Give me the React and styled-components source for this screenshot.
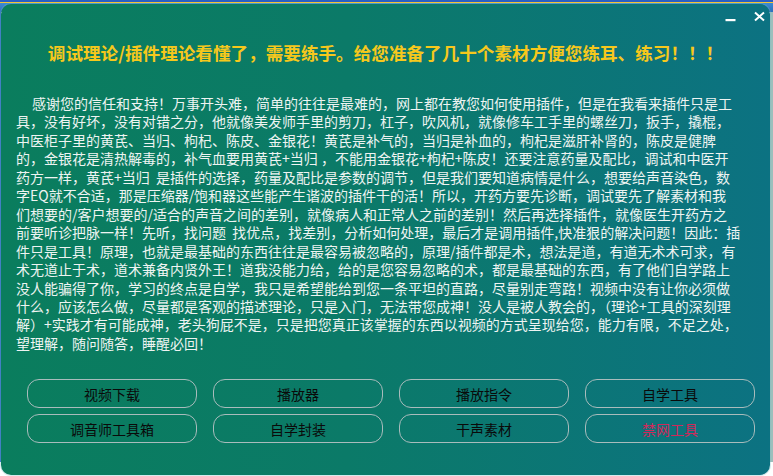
import React from 'react';
import styled, { createGlobalStyle } from 'styled-components';

const GlobalStyle = createGlobalStyle`
  html, body {
    margin: 0;
    padding: 0;
    overflow: hidden;
  }
  body {
    width: 773px;
    height: 476px;
    background:
      linear-gradient(180deg, #2a5fc4 0px, #2a5fc4 2px, #f3c534 2px, #f3c534 3px, #3d8bd0 3px, #2b6fbd 12px, transparent 12px),
      linear-gradient(90deg, #2c66c2 0px, #2c66c2 1px, transparent 1px, transparent 770px, #9cbfbc 770px) 0 0 / 100% 462px no-repeat,
      #ffffff;
  }
`;

const Page = styled.div`
  width: 773px;
  height: 476px;
  box-sizing: border-box;
  padding: 4px 3px 1px 1px;
  display: flex;
`;

const Card = styled.div`
  flex: 1;
  display: flex;
  flex-direction: column;
  border-radius: 10px;
  background: linear-gradient(90deg, #0a7d5d 0%, #0b7a68 45%, #0c7282 100%);
  box-shadow: 0 0 0 1px rgba(120, 190, 200, 0.3);
  font-family: 'Noto Sans CJK SC', 'Noto Sans', sans-serif;
  overflow: hidden;
`;

const WindowBar = styled.div`
  display: flex;
  justify-content: flex-end;
  align-items: center;
  gap: 18px;
  height: 16px;
  margin-top: 4px;
  padding-right: 5px;
`;

const WinButton = styled.button`
  border: 0;
  padding: 0;
  background: none;
  width: 11px;
  height: 11px;
  display: flex;
  align-items: center;
  justify-content: center;
  cursor: pointer;
`;

const Title = styled.h1`
  margin: 17px 0 0;
  text-align: center;
  color: #f6c81c;
  font-size: 17.6px;
  line-height: 24px;
  font-weight: 700;
  white-space: nowrap;
`;

const Body = styled.div`
  margin-top: 29px;
  padding-left: 15px;
  color: #eef4f2;
  font-size: 14px;
  line-height: 18.45px;
`;

const Line = styled.div`
  white-space: pre;
  padding-left: ${props => (props.indent ? '16px' : '0')};
`;

const ButtonGrid = styled.div`
  margin-top: 27px;
  margin-left: 26px;
  display: grid;
  grid-template-columns: repeat(4, 170px);
  grid-auto-rows: 29px;
  column-gap: 16px;
  row-gap: 6px;
`;

const ToolButton = styled.button`
  box-sizing: border-box;
  border: 1px solid #a9bcbc;
  border-radius: 12px;
  background: transparent;
  color: ${props => (props.danger ? '#d1285a' : '#0a0a0a')};
  font-family: 'Noto Sans CJK SC', 'Noto Sans', sans-serif;
  font-size: 14px;
  padding: 0;
  cursor: pointer;
`;

const lines = [
  '感谢您的信任和支持！万事开头难，简单的往往是最难的，网上都在教您如何使用插件，但是在我看来插件只是工',
  '具，没有好坏，没有对错之分，他就像美发师手里的剪刀，杠子，吹风机，就像修车工手里的螺丝刀，扳手，撬棍，',
  '中医柜子里的黄芪、当归、枸杞、陈皮、金银花！黄芪是补气的，当归是补血的，枸杞是滋肝补肾的，陈皮是健脾',
  '的，金银花是清热解毒的，补气血要用黄芪+当归 ，不能用金银花+枸杞+陈皮！还要注意药量及配比，调试和中医开',
  '药方一样，黄芪+当归  是插件的选择，药量及配比是参数的调节，但是我们要知道病情是什么，想要给声音染色，数',
  '字EQ就不合适，那是压缩器/饱和器这些能产生谐波的插件干的活！所以，开药方要先诊断，调试要先了解素材和我',
  '们想要的/客户想要的/适合的声音之间的差别，就像病人和正常人之前的差别！然后再选择插件，就像医生开药方之',
  '前要听诊把脉一样！先听，找问题  找优点，找差别，分析如何处理，最后才是调用插件,快准狠的解决问题！因此：插',
  '件只是工具！原理，也就是最基础的东西往往是最容易被忽略的，原理/插件都是术，想法是道，有道无术术可求，有',
  '术无道止于术，道术兼备内贤外王！道我没能力给，给的是您容易忽略的术，都是最基础的东西，有了他们自学路上',
  '没人能骗得了你，学习的终点是自学，我只是希望能给到您一条平坦的直路，尽量别走弯路！视频中没有让你必须做',
  '什么，应该怎么做，尽量都是客观的描述理论，只是入门，无法带您成神！没人是被人教会的，（理论+工具的深刻理',
  '解）+实践才有可能成神，老头狗屁不是，只是把您真正该掌握的东西以视频的方式呈现给您，能力有限，不足之处，',
  '望理解，随问随答，睡醒必回！',
];

const tools = [
  { label: '视频下载' },
  { label: '播放器' },
  { label: '播放指令' },
  { label: '自学工具' },
  { label: '调音师工具箱' },
  { label: '自学封装' },
  { label: '干声素材' },
  { label: '禁网工具', danger: true },
];

const App = () => (
  <Page>
    <GlobalStyle />
    <Card>
      <WindowBar>
        <WinButton aria-label="最小化">
          <svg width="11" height="11" viewBox="0 0 11 11">
            <rect x="0.5" y="8" width="10" height="2.2" fill="#ffffff" />
          </svg>
        </WinButton>
        <WinButton aria-label="关闭">
          <svg width="11" height="11" viewBox="0 0 11 11">
            <path d="M1 1.5 L10 9.5 M10 1.5 L1 9.5" stroke="#ffffff" strokeWidth="2" />
          </svg>
        </WinButton>
      </WindowBar>
      <Title>调试理论/插件理论看懂了，需要练手。给您准备了几十个素材方便您练耳、练习！！！</Title>
      <Body>
        {lines.map((text, i) => (
          <Line key={i} indent={i === 0}>
            {text}
          </Line>
        ))}
      </Body>
      <ButtonGrid>
        {tools.map(({ label, danger }) => (
          <ToolButton key={label} danger={danger}>
            {label}
          </ToolButton>
        ))}
      </ButtonGrid>
    </Card>
  </Page>
);

export default App;
